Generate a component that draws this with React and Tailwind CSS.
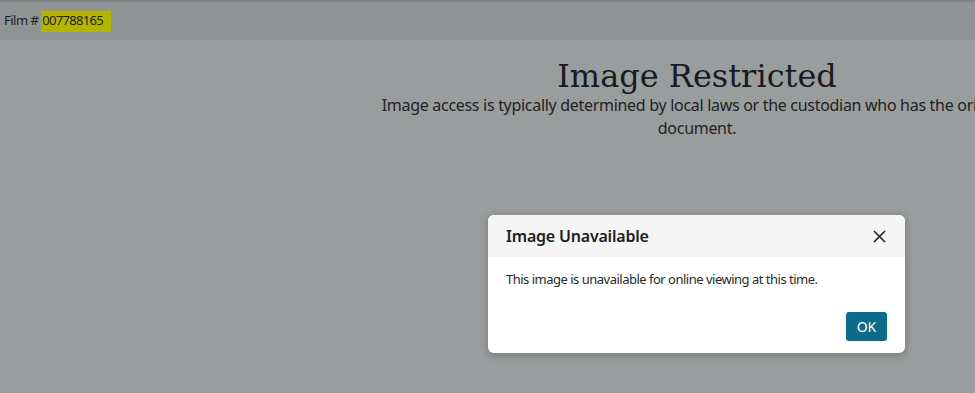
import React from 'react';

const App = () => {
  return (
    <div
      className="relative w-[975px] h-[393px] overflow-hidden bg-[#9a9d9e] text-[#1c1d1e]"
      style={{ fontFamily: '"Noto Sans", "Open Sans", sans-serif' }}
    >
      {/* Film bar */}
      <div className="h-[40px] bg-[#919495] border-t-2 border-[#808384] flex items-center pl-[4px] text-[13px] tracking-[-0.5px]">
        <span className="whitespace-pre">Film # </span>
        <span className="bg-[#b3b500] h-[21px] flex items-center pl-[1px] pr-[8px] tracking-[-0.7px]">007788165</span>
      </div>

      {/* Restricted notice */}
      <div className="flex">
        <div className="w-[367px] shrink-0"></div>
        <div className="w-[660px] shrink-0 flex flex-col items-center text-center pt-[14px]">
          <h1
            className="text-[32px] leading-[44px] text-[#1a1b1c]"
            style={{ fontFamily: '"DejaVu Serif", serif' }}
          >
            Image Restricted
          </h1>
          <p className="text-[16px] leading-[23px] -mt-[4px] text-[#222324] w-[656px] tracking-[-0.3px]">
            Image access is typically determined by local laws or the custodian who has the original document.
          </p>
        </div>
      </div>

      {/* Dialog */}
      <div className="absolute left-[488px] top-[215px] w-[417px] rounded-[6px] bg-white overflow-hidden shadow-[0_2px_8px_rgba(0,0,0,0.25)]">
        <div className="h-[42px] bg-[#f5f5f5] flex items-center justify-between pl-[18px] pr-[19px]">
          <span className="text-[16px] font-semibold text-[#202122] tracking-[-0.2px]">Image Unavailable</span>
          <svg width="13" height="13" viewBox="0 0 13 13" fill="none" stroke="#202122" strokeWidth="1.6">
            <path d="M1 1 L12 12 M12 1 L1 12" />
          </svg>
        </div>
        <div className="px-[18px] pt-[13px] text-[13px] text-[#2a2b2c] tracking-[-0.5px]">
          This image is unavailable for online viewing at this time.
        </div>
        <div className="flex justify-end pr-[18px] pt-[22px] pb-[12px]">
          <button className="w-[41px] h-[29px] rounded-[3px] bg-[#0b6b8b] text-white text-[14px]">OK</button>
        </div>
      </div>
    </div>
  );
};

export default App;
